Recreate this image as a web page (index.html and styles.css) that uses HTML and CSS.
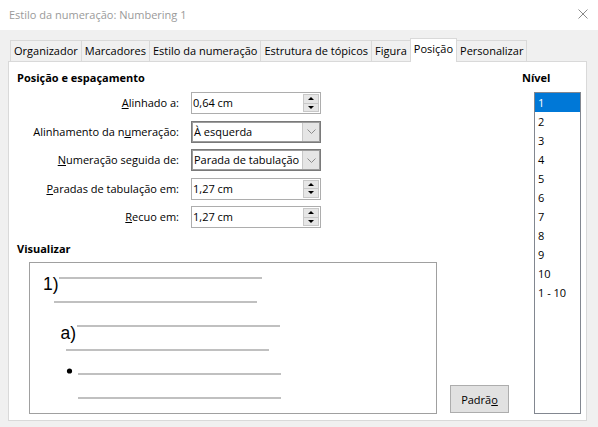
FILE: index.html
```html
<!DOCTYPE html>
<html lang="pt">
<head>
<meta charset="utf-8">
<title>Estilo da numeração</title>
<link rel="stylesheet" href="styles.css">
</head>
<body>
<div class="window">
  <div class="titlebar">
    <span class="title">Estilo da numeração: Numbering 1</span>
    <svg class="close" width="10" height="10" viewBox="0 0 10 10"><path d="M0.5 0.5L9.5 9.5M9.5 0.5L0.5 9.5" stroke="#8a8a8a" stroke-width="1" fill="none"/></svg>
  </div>
  <div class="tabs">
    <div class="tab">Organizador</div>
    <div class="tab">Marcadores</div>
    <div class="tab">Estilo da numeração</div>
    <div class="tab">Estrutura de tópicos</div>
    <div class="tab">Figura</div>
    <div class="tab active">Posição</div>
    <div class="tab last">Personalizar</div>
  </div>
  <div class="panel">
    <div class="main">
      <div class="heading">Posição e espaçamento</div>
      <div class="form">
        <div class="lbl"><u>A</u>linhado a:</div>
        <div class="spin"><span class="val">0,64 cm</span><span class="spinbtns"><span class="sb up"></span><span class="sb down"></span></span></div>

        <div class="lbl">Alinhamento da n<u>u</u>meração:</div>
        <div class="combo"><span class="val">À esquerda</span><span class="drop"><svg width="9" height="5" viewBox="0 0 9 5"><path d="M0.5 0.5L4.5 4.5L8.5 0.5" stroke="#8c8c8c" fill="none"/></svg></span></div>

        <div class="lbl"><u>N</u>umeração seguida de:</div>
        <div class="combo"><span class="val">Parada de tabulação</span><span class="drop"><svg width="9" height="5" viewBox="0 0 9 5"><path d="M0.5 0.5L4.5 4.5L8.5 0.5" stroke="#8c8c8c" fill="none"/></svg></span></div>

        <div class="lbl"><u>P</u>aradas de tabulação em:</div>
        <div class="spin"><span class="val">1,27 cm</span><span class="spinbtns"><span class="sb up"></span><span class="sb down"></span></span></div>

        <div class="lbl"><u>R</u>ecuo em:</div>
        <div class="spin"><span class="val">1,27 cm</span><span class="spinbtns"><span class="sb up"></span><span class="sb down"></span></span></div>
      </div>
      <div class="heading vis">Visualizar</div>
      <div class="preview-row">
        <div class="preview">
          <svg width="406" height="150" viewBox="0 0 406 150">
            <g fill="#c0c0c0">
              <rect x="29" y="14" width="203" height="2"/>
              <rect x="24" y="38" width="203" height="2"/>
              <rect x="47" y="62" width="203" height="2"/>
              <rect x="36" y="86" width="203" height="2"/>
              <rect x="48" y="110" width="203" height="2"/>
              <rect x="48" y="134" width="203" height="2"/>
            </g>
            <text x="13" y="26.5" class="pv-num">1)</text>
            <text x="30.5" y="75.5" class="pv-num">a)</text>
            <circle cx="39.5" cy="108" r="2.6" fill="#000"/>
          </svg>
        </div>
        <button class="btn">Padrã<u>o</u></button>
      </div>
    </div>
    <div class="side">
      <div class="heading">Nível</div>
      <ul class="list">
        <li class="sel">1</li>
        <li>2</li>
        <li>3</li>
        <li>4</li>
        <li>5</li>
        <li>6</li>
        <li>7</li>
        <li>8</li>
        <li>9</li>
        <li>10</li>
        <li>1 - 10</li>
      </ul>
    </div>
  </div>
</div>
</body>
</html>
```

FILE: styles.css
```css
html, body {
  margin: 0;
  padding: 0;
}
body {
  background: #f0f0f0;
  font-family: "Open Sans", "Noto Sans", sans-serif;
  font-size: 11px;
  color: #000;
  width: 598px;
  height: 427px;
  overflow: hidden;
}
.window {
  width: 598px;
  height: 427px;
}
.titlebar {
  height: 30px;
  background: #fff;
  display: flex;
  align-items: center;
  justify-content: space-between;
  padding: 0 10px 0 9px;
  box-sizing: border-box;
}
.title {
  color: #9a9a9a;
  font-size: 11px;
  line-height: 16px;
}
.close {
  display: block;
  margin-top: -2px;
}
.tabs {
  display: flex;
  align-items: flex-end;
  height: 23px;
  margin-top: 8px;
  padding-left: 10px;
  position: relative;
  z-index: 2;
}
.tab {
  height: 21px;
  box-sizing: border-box;
  border: 1px solid #d9d9d9;
  border-right: none;
  border-bottom: none;
  padding: 0 3px;
  line-height: 19px;
  background: #f0f0f0;
  white-space: nowrap;
}
.tab.active {
  height: 24px;
  margin-bottom: -1px;
  background: #fff;
  border-right: 1px solid #d9d9d9;
  line-height: 20px;
}
.tab.active + .tab {
  border-left: none;
}
.tab.last {
  border-right: 1px solid #d9d9d9;
}
.panel {
  margin-left: 8px;
  width: 579px;
  height: 360px;
  box-sizing: border-box;
  border: 1px solid #d9d9d9;
  background: #fff;
  display: flex;
}
.main {
  flex: 0 0 513px;
  padding: 8px 0 0 8px;
  box-sizing: border-box;
}
.heading {
  font-weight: 700;
  line-height: 16px;
}
.form {
  display: grid;
  grid-template-columns: 162px 130px;
  column-gap: 12px;
  grid-auto-rows: 22px;
  row-gap: 6.5px;
  margin-top: 6px;
}
.lbl {
  text-align: right;
  line-height: 22px;
  white-space: nowrap;
}
.spin, .combo {
  display: flex;
  box-sizing: border-box;
  height: 22px;
  background: #fff;
}
.spin {
  border: 1px solid #adadad;
  padding: 1px 1px 1px 0;
}
.combo {
  border: 1px solid #7a7a7a;
  box-shadow: inset 0 0 0 1px #9c9c9c;
  padding: 1px;
}
.val {
  flex: 1;
  padding-left: 1px;
  line-height: 18px;
  white-space: nowrap;
  overflow: hidden;
}
.spinbtns {
  display: flex;
  flex-direction: column;
  width: 16px;
}
.sb {
  flex: 1;
  box-sizing: border-box;
  border: 1px solid #c8c8c8;
  background: #e6e6e6;
  display: flex;
  align-items: center;
  justify-content: center;
}
.sb.up {
  border-bottom: none;
}
.sb::after {
  content: "";
  width: 0;
  height: 0;
  border-left: 3px solid transparent;
  border-right: 3px solid transparent;
}
.sb.up::after {
  border-bottom: 3px solid #000;
}
.sb.down::after {
  border-top: 3px solid #000;
}
.drop {
  width: 16px;
  background: #e5e5e5;
  border-left: 1px solid #c8c8c8;
  display: flex;
  align-items: center;
  justify-content: center;
}
.drop svg {
  display: block;
}
.heading.vis {
  margin-top: 13px;
}
.preview-row {
  display: flex;
  margin-top: 5px;
}
.preview {
  margin-left: 12px;
  width: 408px;
  height: 152px;
  box-sizing: border-box;
  border: 1px solid #a0a0a0;
  background: #fff;
}
.preview svg {
  display: block;
}
.pv-num {
  font-family: "Liberation Sans", Arial, sans-serif;
  font-size: 17.5px;
  fill: #000;
}
.btn {
  align-self: flex-end;
  margin: 0 0 1px 13px;
  width: 59px;
  height: 28px;
  box-sizing: border-box;
  border: 1px solid #adadad;
  background: #e1e1e1;
  font-family: inherit;
  font-size: 11px;
  color: #000;
  padding: 0;
}
.side {
  flex: 1;
  padding-top: 8px;
}
.list {
  list-style: none;
  margin: 6px 0 0 12px;
  padding: 0;
  width: 47px;
  height: 322px;
  box-sizing: border-box;
  border: 1px solid #828790;
}
.list li {
  height: 19px;
  line-height: 19px;
  padding-left: 3px;
}
.list li.sel {
  background: #0078d7;
  color: #fff;
}
```
